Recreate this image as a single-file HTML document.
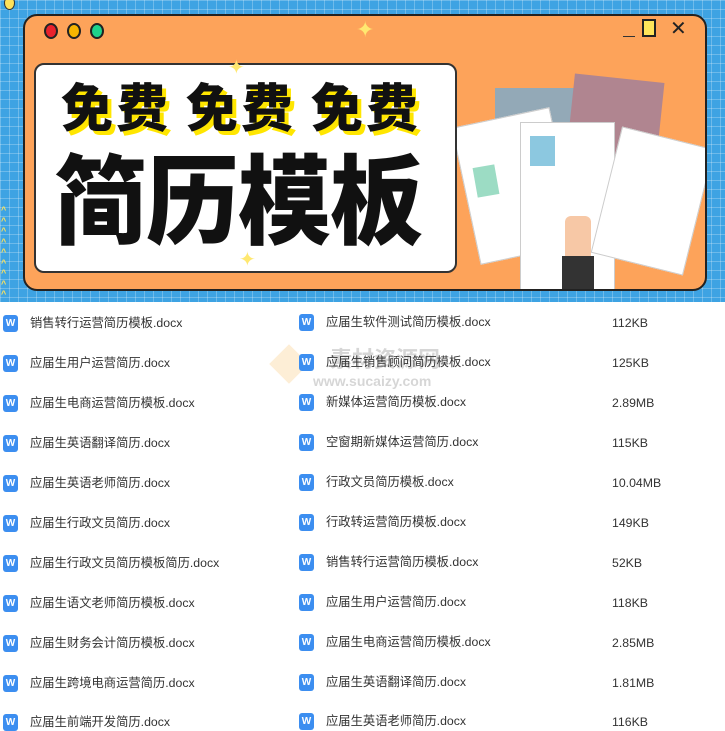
<!DOCTYPE html>
<html><head><meta charset="utf-8"><style>
*{margin:0;padding:0;box-sizing:border-box}
body{width:725px;height:731px;overflow:hidden;background:#fff;font-family:"Liberation Sans","Noto Sans CJK SC",sans-serif;position:relative}
.banner{position:absolute;left:0;top:0;width:725px;height:302px;background-color:#3ea3e3;overflow:hidden;
background-image:linear-gradient(rgba(255,255,255,.25) 1px,transparent 1px),linear-gradient(90deg,rgba(255,255,255,.25) 1px,transparent 1px);background-size:9px 9px}
.win{position:absolute;left:23px;top:14px;width:684px;height:277px;background:#fda35a;border:2px solid #222;border-radius:14px;overflow:hidden}
.dot{position:absolute;top:7px;width:14px;height:16px;border-radius:50%;border:2px solid #222}
.panel{position:absolute;left:9px;top:47px;width:423px;height:210px;background:#fff;border:2px solid #333;border-radius:10px;z-index:2}
.t1{position:absolute;left:25px;top:14px;font-size:52px;line-height:1;font-weight:900;color:#111;letter-spacing:3px;text-shadow:4px 4px 0 #ffe600;white-space:nowrap;font-family:"Noto Sans CJK SC",sans-serif}
.t2{position:absolute;left:18px;top:80px;font-size:93px;line-height:1;font-weight:900;color:#111;letter-spacing:-1px;white-space:nowrap;font-family:"Noto Sans CJK SC",sans-serif;transform:scaleY(1.05);transform-origin:top left}
.paper{position:absolute;background:#fff;border:1px solid #ccc}
.row{position:absolute;font-size:12.3px;line-height:16px;color:#333;white-space:nowrap}
.ic{position:absolute;width:15px;height:17px;background:#3c8ef0;border-radius:3px;color:#fff;font-size:10px;font-weight:bold;text-align:center;line-height:17px}
.wm{position:absolute;color:rgba(120,120,120,.3);font-weight:bold;white-space:nowrap}
</style></head><body>
<div class="banner">
 <div style="position:absolute;left:4px;top:-4px;width:11px;height:14px;border-radius:50%;background:#ffe25a;border:1px solid #333"></div>
 <div style="position:absolute;left:1px;top:205px;font-size:9px;line-height:10.5px;color:#ffe25a;font-weight:bold">^<br>^<br>^<br>^<br>^<br>^<br>^<br>^<br>^</div>
 <div class="win">
  <div class="dot" style="left:19px;background:#e8222d"></div>
  <div class="dot" style="left:42px;background:#f7b500"></div>
  <div class="dot" style="left:65px;background:#1ed38c"></div>
  <div style="position:absolute;left:598px;top:20px;width:12px;height:1px;background:#333"></div>
  <div style="position:absolute;left:617px;top:3px;width:14px;height:18px;background:#ffe45a;border:2px solid #222"></div>
  <div style="position:absolute;left:645px;top:0px;font-size:20px;color:#222">✕</div>
  <div style="position:absolute;left:331px;top:1px;font-size:22px;color:#ffe870">✦</div>
  <div class="panel">
   <div style="position:absolute;left:192px;top:-10px;font-size:20px;color:#ffe870">✦</div>
   <div style="position:absolute;left:203px;top:182px;font-size:20px;color:#ffe870">✦</div>
   <div class="t1">免费 免费 免费</div>
   <div class="t2">简历模板</div>
  </div>
  <div class="paper" style="left:470px;top:72px;width:96px;height:90px;background:#93a9b7;border:none"></div>
  <div class="paper" style="left:545px;top:62px;width:90px;height:90px;background:#b08590;border:none;transform:rotate(6deg)"></div>
  <div class="paper" style="left:440px;top:100px;width:100px;height:140px;transform:rotate(-12deg)"></div>
  <div class="paper" style="left:495px;top:106px;width:95px;height:170px"></div>
  <div class="paper" style="left:580px;top:120px;width:95px;height:130px;transform:rotate(14deg)"></div>
  <div style="position:absolute;left:505px;top:120px;width:25px;height:30px;background:#8cc8e0"></div>
  <div style="position:absolute;left:450px;top:150px;width:22px;height:30px;background:#9cdcc4;transform:rotate(-10deg)"></div>
  <div style="position:absolute;left:540px;top:200px;width:26px;height:45px;background:#f7c8a6;border-radius:6px"></div>
  <div style="position:absolute;left:537px;top:240px;width:32px;height:40px;background:#333"></div>
 </div>
</div>
<div class="wm" style="left:330px;top:342px;font-size:22px">素材资源网</div>
<div class="wm" style="left:313px;top:373px;font-size:14px">www.sucaizy.com</div>
<div style="position:absolute;left:275px;top:350px;width:28px;height:28px;background:rgba(250,200,120,.3);transform:rotate(45deg)"></div>
<div id="list"></div>
<script>
const L=["销售转行运营简历模板.docx","应届生用户运营简历.docx","应届生电商运营简历模板.docx","应届生英语翻译简历.docx","应届生英语老师简历.docx","应届生行政文员简历.docx","应届生行政文员简历模板简历.docx","应届生语文老师简历模板.docx","应届生财务会计简历模板.docx","应届生跨境电商运营简历.docx","应届生前端开发简历.docx"];
const R=[["应届生软件测试简历模板.docx","112KB"],["应届生销售顾问简历模板.docx","125KB"],["新媒体运营简历模板.docx","2.89MB"],["空窗期新媒体运营简历.docx","115KB"],["行政文员简历模板.docx","10.04MB"],["行政转运营简历模板.docx","149KB"],["销售转行运营简历模板.docx","52KB"],["应届生用户运营简历.docx","118KB"],["应届生电商运营简历模板.docx","2.85MB"],["应届生英语翻译简历.docx","1.81MB"],["应届生英语老师简历.docx","116KB"]];
let h="";
for(let i=0;i<11;i++){const y=323+i*40;const yy=y-(i==10?1:0);
h+=`<div class="ic" style="left:3px;top:${yy-8}px">W</div><div class="row" style="left:30px;top:${yy-8}px">${L[i]}</div>`;
h+=`<div class="ic" style="left:299px;top:${yy-9}px">W</div><div class="row" style="left:326px;top:${yy-9}px">${R[i][0]}</div><div class="row" style="left:612px;top:${yy-8}px">${R[i][1]}</div>`;}
document.getElementById("list").innerHTML=h;
</script>
</body></html>
